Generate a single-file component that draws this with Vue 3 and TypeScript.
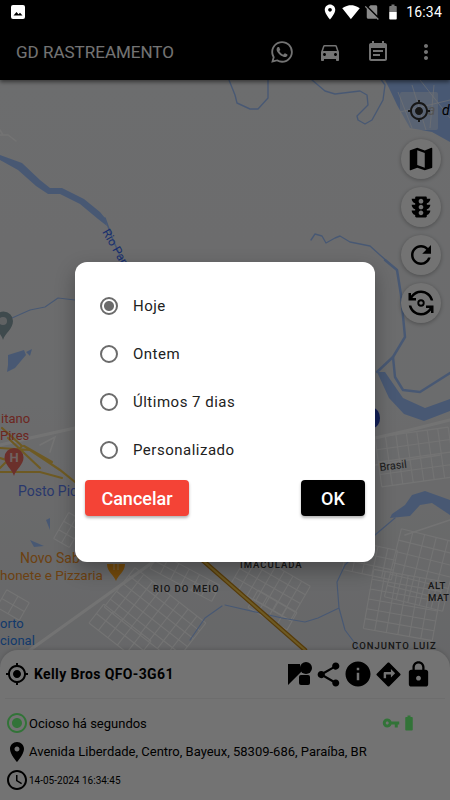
<script setup lang="ts">
import { ref } from 'vue'

interface Grid {
  x: number
  y: number
  w: number
  h: number
  cols: number
  rows: number
  rot: number
}

const options = ['Hoje', 'Ontem', 'Últimos 7 dias', 'Personalizado']
const selected = ref('Hoje')

// street blocks on the map
const grids: Grid[] = [
  { x: 378, y: 432, w: 74, h: 50, cols: 7, rows: 4, rot: -8 },
  { x: 392, y: 535, w: 60, h: 70, cols: 5, rows: 6, rot: 14 },
  { x: 368, y: 575, w: 70, h: 60, cols: 6, rows: 6, rot: 10 },
  { x: 345, y: 545, w: 50, h: 30, cols: 5, rows: 3, rot: 12 },
  { x: 110, y: 590, w: 90, h: 50, cols: 8, rows: 5, rot: 38 },
  { x: 90, y: 620, w: 60, h: 24, cols: 5, rows: 2, rot: 38 },
  { x: 235, y: 566, w: 70, h: 40, cols: 7, rows: 4, rot: 30 },
  { x: 250, y: 600, w: 45, h: 20, cols: 4, rows: 2, rot: 30 },
  { x: 150, y: 568, w: 70, h: 18, cols: 6, rows: 2, rot: 28 },
  { x: 60, y: 515, w: 18, h: 30, cols: 2, rows: 3, rot: 30 },
  { x: 0, y: 595, w: 26, h: 20, cols: 2, rows: 2, rot: 30 },
]

function gridPath(g: Grid): string {
  let d = ''
  for (let i = 0; i <= g.cols; i++) {
    const px = g.x + (g.w / g.cols) * i
    d += `M${px} ${g.y}V${g.y + g.h}`
  }
  for (let i = 0; i <= g.rows; i++) {
    const py = g.y + (g.h / g.rows) * i
    d += `M${g.x} ${py}H${g.x + g.w}`
  }
  return d
}
</script>

<template>
  <div class="phone">
    <div class="status">
      <svg class="st-img" viewBox="0 0 14 14"><rect width="14" height="14" rx="2" fill="#fff" /><path d="M2.500 10.500 5.500 7l2 2.300L9 7.800l2.500 2.700z" fill="#000" /></svg>
      <div class="st-right">
        <svg class="st-ic" viewBox="0 0 24 24"><path fill="#fff" d="M12 2C8.130 2 5 5.130 5 9c0 5.250 7 13 7 13s7-7.750 7-13c0-3.870-3.130-7-7-7zm0 9.500c-1.380 0-2.500-1.120-2.500-2.500s1.120-2.500 2.500-2.500 2.500 1.120 2.500 2.500-1.120 2.500-2.500 2.500z" /></svg>
        <svg class="st-ic" viewBox="0 0 24 24"><path fill="#fff" d="M12.010 21.490L23.640 7c-.45-.34-4.930-4-11.640-4C5.280 3 .81 6.660.36 7l11.640 14.500.01-.01z" /></svg>
        <svg class="st-ic" viewBox="0 0 24 24"><path fill="#8a8a8a" d="M18.990 5c0-1.100-.89-2-1.990-2h-7L7.660 5.340 19 16.680 18.990 5zM3.650 3.880L2.380 5.150 5 7.770V19c0 1.100.9 2 2 2h10.010c.35 0 .67-.1.96-.26l1.880 1.880 1.270-1.270L3.650 3.880z" /></svg>
        <svg class="st-ic" viewBox="0 0 24 24"><path fill="#777" d="M15.670 4H14V2h-4v2H8.330C7.600 4 7 4.600 7 5.330V12h10V5.330C17 4.600 16.400 4 15.670 4z" /><path fill="#fff" d="M7 12v8.670C7 21.400 7.600 22 8.330 22h7.330c.74 0 1.340-.6 1.340-1.330V12z" /></svg>
        <span class="time">16:34</span>
      </div>
    </div>

    <header class="appbar">
      <span class="brand">GD RASTREAMENTO</span>
      <div class="actions">
        <button class="act"><svg class="wa" viewBox="0 0 24 24"><path d="M12.040 2C6.580 2 2.130 6.450 2.130 11.910c0 1.750.46 3.450 1.320 4.950L2.050 22l5.250-1.380c1.450.79 3.080 1.210 4.740 1.210 5.460 0 9.910-4.450 9.910-9.910 0-2.650-1.030-5.140-2.900-7.010A9.816 9.816 0 0 0 12.040 2m.01 1.670c2.200 0 4.260.86 5.820 2.420a8.225 8.225 0 0 1 2.410 5.830c0 4.540-3.700 8.230-8.240 8.230-1.480 0-2.930-.39-4.190-1.150l-.3-.17-3.120.82.83-3.040-.2-.32a8.188 8.188 0 0 1-1.260-4.380c.01-4.540 3.700-8.240 8.250-8.240M8.530 7.330c-.16 0-.43.06-.66.31-.22.25-.87.86-.87 2.070 0 1.220.89 2.390 1 2.560.14.17 1.760 2.670 4.250 3.730.59.27 1.050.42 1.410.53.59.19 1.130.16 1.560.1.48-.07 1.460-.6 1.670-1.180.21-.58.21-1.070.15-1.180-.07-.1-.23-.16-.48-.27-.25-.14-1.470-.74-1.690-.82-.23-.08-.37-.12-.56.12-.16.25-.64.81-.78.97-.15.17-.29.19-.53.07-.26-.13-1.060-.39-2-1.230-.74-.66-1.230-1.470-1.380-1.720-.12-.24-.01-.39.11-.5.11-.11.27-.29.37-.44.13-.14.17-.25.25-.41.08-.17.04-.31-.02-.43-.06-.11-.56-1.350-.77-1.840-.2-.48-.4-.42-.56-.43-.14 0-.3-.01-.47-.01z" /></svg></button>
        <button class="act"><svg viewBox="0 0 24 24"><path d="M18.920 6.010C18.720 5.420 18.160 5 17.500 5h-11c-.66 0-1.210.42-1.420 1.010L3 12v8c0 .55.45 1 1 1h1c.55 0 1-.45 1-1v-1h12v1c0 .55.45 1 1 1h1c.55 0 1-.45 1-1v-8l-2.080-5.990zM6.500 16c-.83 0-1.500-.67-1.500-1.500S5.670 13 6.500 13s1.500.67 1.500 1.500S7.330 16 6.500 16zm11 0c-.83 0-1.500-.67-1.500-1.500s.67-1.500 1.500-1.500 1.500.67 1.500 1.500-.67 1.500-1.500 1.500zM5 11l1.500-4.500h11L19 11H5z" /></svg></button>
        <button class="act"><svg viewBox="0 0 24 24"><path d="M17 10H7v2h10v-2zm2-7h-1V1h-2v2H8V1H6v2H5c-1.110 0-1.990.9-1.990 2L3 19c0 1.100.89 2 2 2h14c1.100 0 2-.9 2-2V5c0-1.100-.9-2-2-2zm0 16H5V8h14v11zm-5-5H7v2h7v-2z" /></svg></button>
        <button class="act"><svg viewBox="0 0 24 24"><path d="M12 8c1.100 0 2-.9 2-2s-.9-2-2-2-2 .9-2 2 .9 2 2 2zm0 2c-1.100 0-2 .9-2 2s.9 2 2 2 2-.9 2-2-.9-2-2-2zm0 6c-1.100 0-2 .9-2 2s.9 2 2 2 2-.9 2-2-.9-2-2-2z" /></svg></button>
      </div>
    </header>

    <main class="map">
      <!-- viewBox uses page coordinates, the map starts 80px down -->
      <svg class="map-art" viewBox="0 80 450 720">
        <defs>
          <linearGradient id="land" x1="0" y1="0" x2="0" y2="1">
            <stop offset="0" stop-color="#f0f1f3" />
            <stop offset=".45" stop-color="#eeeff1" />
            <stop offset="1" stop-color="#dedfe2" />
          </linearGradient>
        </defs>
        <rect x="0" y="80" width="450" height="720" fill="url(#land)" />

        <g fill="none" stroke="#fff" stroke-width="1.100">
          <path v-for="(g, i) in grids" :key="i" :d="gridPath(g)" :transform="`rotate(${g.rot} ${g.x + g.w / 2} ${g.y + g.h / 2})`" />
        </g>
        <g fill="none" stroke="#fff" stroke-linecap="round">
          <path stroke-width="3" d="M30 650 153 562" />
          <path stroke-width="3" d="M0 445 30 438 75 428" />
          <path stroke-width="3" d="M375 438 410 430 450 420" />
          <path stroke-width="1.500" d="M375 465 440 455M405 535 450 520M0 135 8 135 16 141M0 130 3 135M40 445 55 437 50 452" />
        </g>

        <!-- water -->
        <g fill="#a0c4ff" stroke="none">
          <path d="M385 80H450V142L432 132 410 128 397 105 389 88z" />
          <path d="M377 372 389 398 404 414 424 421 450 411V399L425 408 403 398 385 372z" />
          <path d="M0 155 22 163 40 180 50 188 62 188 84 199 100 212 105 218 107 226 98 219 80 204 60 194 48 194 36 186 18 170 0 160z" />
          <path d="M405 505 412 495 425 491 450 500V515L432 503 420 505 410 516 390 518 392 514z" />
          <path d="M8 355 24 350 26 355 15 368 7 372 8 365zM26 352 32 349 30 356z" />
          <path d="M46 520 50 518 50 530zM30 540 44 546 34 547z" />
        </g>
        <g fill="none" stroke="#fff" stroke-width=".8" opacity=".8">
          <path d="M398 92 412 128M412 85 426 130M434 85 430 128M400 112 450 100M420 80 450 118" />
        </g>
        <g fill="none" stroke="#a0c4ff" stroke-linecap="round" stroke-linejoin="round">
          <path stroke-width="1.400" d="M229 80 235 95 237 103 250 109 258 109 268 98 268 80" />
          <path stroke-width="1.400" d="M312 80 325 91 335 94 360 91 367 95 368 105 357 116 358 120 365 124 372 120 383 100 385 85 380 78" />
          <path stroke-width="1.400" d="M311 240 315 234 322 236 326 243 335 238 340 236 350 242 370 246 380 255 397 270" />
          <path stroke-width="2.500" d="M385 260 397 270 401 295 405 337 393 357 377 372" />
          <path stroke-width="2.500" d="M393 357 395 377 403 390 420 392 450 373" />
          <path stroke-width="1.200" d="M12 318 30 310 45 307 58 298 75 300" />
          <path stroke-width="1.600" d="M105 218 113 240 123 262" />
          <path stroke-width="1.200" d="M395 518 375 535 345 565 337 582 339 608 318 618 305 622 282 618 225 605M339 608 345 630 360 650" />
          <path stroke-width="1.200" d="M190 640 205 618 222 606" />
        </g>
        <ellipse cx="373" cy="418" rx="7" ry="10" fill="#2a48c0" />

        <!-- highways -->
        <g fill="none" stroke="#f4c84f" stroke-width="2.200" stroke-linecap="round">
          <path d="M0 468 22 446 2 428M0 448 30 450 60 470 75 482M0 472 40 472 62 478M24 446 52 462M8 438 40 468M0 458 14 462" />
          <path stroke="#c08418" stroke-width="4.500" d="M200 558 305 650" />
          <path stroke="#f4c84f" stroke-width="2" d="M200 558 305 650" />
        </g>

        <!-- pins -->
        <path fill="#ee6a60" d="M14 476c-2-7-9.500-11-9.500-18.500a9.500 9.500 0 0 1 19 0c0 7.500-7.500 11.500-9.500 18.500z" />
        <text class="pin-h" x="14" y="462" text-anchor="middle">H</text>
        <path fill="#8ca4ab" d="M3 340c-2-7-9-11-9-19a9.500 9.500 0 0 1 19 0c0 8-8 12-10 19z" />
        <circle cx="3" cy="321" r="4" fill="#d6dadc" />
        <path fill="#ffa51a" d="M116 581c-2-6-9-9-9-17h18c0 8-7 11-9 17z" />
        <path fill="none" stroke="#ffd9a0" stroke-width="1" d="M114 564v6M118 564v6" />

        <!-- labels -->
        <g class="lbl">
          <text class="mid red" x="1" y="423">itano</text>
          <text class="mid red" x="0" y="440">Pires</text>
          <text class="big" x="18" y="496" fill="#5c7cf0">Posto Pic</text>
          <text class="big" x="20" y="563" fill="#f09028">Novo Sab</text>
          <text class="fit" x="0" y="580" fill="#f09028">honete e Pizzaria</text>
          <text class="mid" x="0" y="628" fill="#2a80ee">orto</text>
          <text class="mid" x="0" y="645" fill="#2a80ee">cional</text>
          <text class="small" x="153" y="592">RIO DO MEIO</text>
          <text class="small" x="240" y="568">IMACULADA</text>
          <text class="small tight" x="428" y="589">ALT</text>
          <text class="small tight" x="428" y="601">MAT</text>
          <text class="small" x="352" y="649">CONJUNTO LUIZ</text>
          <text class="brasil" x="380" y="471" transform="rotate(-7 380 471)">Brasil</text>
          <text class="rio" x="102" y="232" transform="rotate(60 102 232)">Rio Par</text>
          <text class="top" x="428" y="115"><tspan fill="#8d8d8d">a</tspan><tspan x="442">d</tspan></text>
        </g>
      </svg>

      <div class="locate">
        <svg viewBox="0 0 24 24"><path d="M12 8c-2.210 0-4 1.790-4 4s1.790 4 4 4 4-1.790 4-4-1.790-4-4-4zm8.940 3c-.46-4.170-3.770-7.480-7.940-7.940V1h-2v2.060C6.830 3.520 3.520 6.830 3.060 11H1v2h2.060c.46 4.170 3.770 7.480 7.940 7.940V23h2v-2.060c4.170-.46 7.480-3.770 7.940-7.940H23v-2h-2.060zM12 19c-3.870 0-7-3.130-7-7s3.130-7 7-7 7 3.130 7 7-3.130 7-7 7z" /></svg>
      </div>

      <div class="fabs">
        <button class="fab"><svg viewBox="0 0 24 24"><path d="M20.500 3l-.16.030L15 5.100 9 3 3.360 4.900c-.21.070-.36.250-.36.480V20.500c0 .28.220.5.5.5l.16-.03L9 18.900l6 2.100 5.640-1.900c.21-.07.36-.25.36-.48V3.500c0-.28-.22-.5-.5-.5zM15 19l-6-2.110V5l6 2.110V19z" /></svg></button>
        <button class="fab"><svg class="tl" viewBox="0 0 24 24"><path d="M20 10h-3V8.860c1.720-.45 3-2 3-3.860h-3V4c0-.55-.45-1-1-1H8c-.55 0-1 .45-1 1v1H4c0 1.860 1.280 3.410 3 3.860V10H4c0 1.860 1.280 3.410 3 3.860V15H4c0 1.860 1.280 3.410 3 3.860V20c0 .55.45 1 1 1h8c.55 0 1-.45 1-1v-1.140c1.720-.45 3-2 3-3.860h-3v-1.140c1.720-.45 3-2 3-3.860zm-8 9c-1.110 0-2-.9-2-2s.89-2 2-2c1.100 0 2 .9 2 2s-.89 2-2 2zm0-5c-1.110 0-2-.9-2-2s.89-2 2-2c1.100 0 2 .9 2 2s-.89 2-2 2zm0-5c-1.110 0-2-.9-2-2 0-1.110.89-2 2-2 1.100 0 2 .89 2 2 0 1.100-.89 2-2 2z" /></svg></button>
        <button class="fab"><svg viewBox="0 0 24 24"><path d="M17.650 6.350C16.200 4.900 14.210 4 12 4c-4.420 0-7.990 3.580-7.990 8s3.570 8 7.990 8c3.730 0 6.840-2.550 7.730-6h-2.080c-.82 2.330-3.040 4-5.650 4-3.310 0-6-2.690-6-6s2.690-6 6-6c1.660 0 3.140.69 4.220 1.780L13 11h7V4l-2.350 2.350z" /></svg></button>
        <button class="fab"><svg viewBox="0 0 24 24"><path d="M8 10V8H5.090C6.470 5.610 9.050 4 12 4c3.720 0 6.850 2.560 7.740 6h2.060c-.93-4.560-4.960-8-9.800-8-3.270 0-6.180 1.580-8 4.010V4H2v6h6zM16 14v2h2.910c-1.380 2.390-3.960 4-6.910 4-3.720 0-6.850-2.560-7.740-6H2.200c.93 4.560 4.960 8 9.800 8 3.270 0 6.180-1.580 8-4.010V20h2v-6h-6z" /><circle cx="12" cy="12" r="2.200" fill="none" stroke="#000" stroke-width="1.500" /></svg></button>
      </div>

      <section class="sheet">
        <div class="sheet-head">
          <svg class="target" viewBox="0 0 24 24"><path d="M12 8c-2.210 0-4 1.790-4 4s1.790 4 4 4 4-1.790 4-4-1.790-4-4-4zm8.940 3c-.46-4.170-3.770-7.480-7.940-7.940V1h-2v2.060C6.830 3.520 3.520 6.830 3.060 11H1v2h2.060c.46 4.170 3.770 7.480 7.940 7.940V23h2v-2.060c4.170-.46 7.480-3.770 7.940-7.940H23v-2h-2.060zM12 19c-3.870 0-7-3.130-7-7s3.130-7 7-7 7 3.130 7 7-3.130 7-7 7z" /></svg>
          <span class="plate">Kelly Bros QFO-3G61</span>
          <div class="tools">
            <svg class="t-map" viewBox="0 0 26 24"><path d="M1 2h12c0 3 1 5 3 6L1 23z" /><circle cx="19" cy="6" r="6" /><rect x="12" y="13" width="11" height="10" rx="2" /></svg>
            <svg viewBox="0 0 24 24"><path d="M18 16.080c-.76 0-1.440.3-1.960.77L8.910 12.700c.05-.23.09-.46.09-.7s-.04-.47-.09-.7l7.050-4.110c.54.5 1.250.81 2.040.81 1.660 0 3-1.340 3-3s-1.340-3-3-3-3 1.340-3 3c0 .24.04.47.09.7L8.040 9.810C7.500 9.310 6.790 9 6 9c-1.660 0-3 1.340-3 3s1.340 3 3 3c.79 0 1.500-.31 2.040-.81l7.120 4.160c-.05.21-.08.43-.08.65 0 1.610 1.310 2.920 2.920 2.920 1.610 0 2.920-1.310 2.920-2.920s-1.310-2.920-2.920-2.920z" /></svg>
            <svg class="t-info" viewBox="0 0 24 24"><path d="M12 2C6.480 2 2 6.480 2 12s4.480 10 10 10 10-4.480 10-10S17.520 2 12 2zm1 15h-2v-6h2v6zm0-8h-2V7h2v2z" /></svg>
            <svg viewBox="0 0 24 24"><path d="M21.710 11.290l-9-9c-.39-.39-1.020-.39-1.410 0l-9 9c-.39.39-.39 1.020 0 1.410l9 9c.39.39 1.020.39 1.410 0l9-9c.39-.38.39-1.010 0-1.410zM14 14.500V12h-4v3H8v-4c0-.55.45-1 1-1h5V7.500l3.500 3.500-3.500 3.500z" /></svg>
            <svg viewBox="0 0 24 24"><path d="M18 8h-1V6c0-2.760-2.240-5-5-5S7 3.240 7 6v2H6c-1.100 0-2 .9-2 2v10c0 1.100.9 2 2 2h12c1.100 0 2-.9 2-2V10c0-1.100-.9-2-2-2zm-6 9c-1.100 0-2-.9-2-2s.9-2 2-2 2 .9 2 2-.9 2-2 2zm3.100-9H8.900V6c0-1.710 1.390-3.100 3.100-3.100 1.710 0 3.100 1.390 3.100 3.100v2z" /></svg>
          </div>
        </div>
        <div class="rows">
          <div class="row">
            <svg class="r-ic green" viewBox="0 0 24 24"><path d="M12 7c-2.760 0-5 2.240-5 5s2.240 5 5 5 5-2.240 5-5-2.240-5-5-5zm0-5C6.480 2 2 6.480 2 12s4.480 10 10 10 10-4.480 10-10S17.520 2 12 2zm0 18c-4.420 0-8-3.580-8-8s3.580-8 8-8 8 3.580 8 8-3.580 8-8 8z" /></svg>
            <span>Ocioso há segundos</span>
            <div class="flags">
              <svg class="green" viewBox="0 0 24 24"><path d="M12.650 10C11.830 7.670 9.610 6 7 6c-3.310 0-6 2.690-6 6s2.690 6 6 6c2.610 0 4.830-1.670 5.650-4H17v4h4v-4h2v-4H12.650zM7 14c-1.100 0-2-.9-2-2s.9-2 2-2 2 .9 2 2-.9 2-2 2z" /></svg>
              <svg class="green" viewBox="0 0 24 24"><path d="M15.670 4H14V2h-4v2H8.330C7.600 4 7 4.600 7 5.330v15.330C7 21.400 7.600 22 8.330 22h7.330c.74 0 1.340-.6 1.340-1.330V5.330C17 4.600 16.400 4 15.670 4z" /></svg>
            </div>
          </div>
          <div class="row">
            <svg class="r-ic" viewBox="0 0 24 24"><path d="M12 2C8.130 2 5 5.130 5 9c0 5.250 7 13 7 13s7-7.750 7-13c0-3.870-3.130-7-7-7zm0 9.500c-1.380 0-2.500-1.120-2.500-2.500s1.120-2.500 2.500-2.500 2.500 1.120 2.500 2.500-1.120 2.500-2.500 2.500z" /></svg>
            <span>Avenida Liberdade, Centro, Bayeux, 58309-686, Paraíba, BR</span>
          </div>
          <div class="row">
            <svg class="r-ic" viewBox="0 0 24 24"><path d="M11.990 2C6.470 2 2 6.480 2 12s4.470 10 9.990 10C17.520 22 22 17.520 22 12S17.520 2 11.990 2zM12 20c-4.420 0-8-3.580-8-8s3.580-8 8-8 8 3.580 8 8-3.580 8-8 8zm.5-13H11v6l5.250 3.150.75-1.230-4.500-2.670z" /></svg>
            <span class="date">14-05-2024 16:34:45</span>
          </div>
        </div>
      </section>
    </main>

    <div class="scrim">
      <div class="dialog">
        <label v-for="o in options" :key="o" class="opt" @click="selected = o">
          <span class="radio" :class="{ on: selected === o }"></span>
          <span>{{ o }}</span>
        </label>
        <div class="btns">
          <button class="btn cancel">Cancelar</button>
          <button class="btn ok">OK</button>
        </div>
      </div>
    </div>
  </div>
</template>

<style>
html, body { margin: 0; background: #000; }
</style>

<style scoped>
.phone {
  position: relative;
  width: 450px;
  height: 800px;
  overflow: hidden;
  display: flex;
  flex-direction: column;
  background: #000;
  font-family: Roboto, "Liberation Sans", sans-serif;
}
button { border: 0; padding: 0; background: none; font-family: inherit; }
svg { display: block; }

.status {
  height: 24px;
  display: flex;
  align-items: center;
  justify-content: space-between;
  padding: 0 8px 0 11px;
}
.st-img { width: 14px; height: 14px; }
.st-right { display: flex; align-items: center; gap: 3px; }
.st-ic { width: 18px; height: 18px; }
.time { color: #fff; font-size: 14px; font-weight: 400; letter-spacing: .2px; margin-left: 1px; }

.appbar {
  position: relative;
  z-index: 2;
  height: 56px;
  display: flex;
  align-items: center;
  justify-content: space-between;
  padding-left: 16px;
  box-shadow: 0 2px 4px rgba(0, 0, 0, .5);
  background: #000;
}
.brand { color: #fff; font-size: 17px; font-weight: 400; }
.actions { display: flex; }
.act { width: 48px; height: 48px; display: flex; align-items: center; justify-content: center; }
.act svg { width: 24px; height: 24px; fill: #fff; }
.act .wa { width: 26px; height: 26px; }

.map { position: relative; flex: 1; }
.map-art { position: absolute; inset: 0; width: 100%; height: 100%; }
.lbl .mid { font-size: 13px; }
.lbl .red { fill: #f0564a; }
.lbl .big { font-size: 14px; }
.lbl .fit { font-size: 13.500px; }
.lbl .small { font-size: 9.500px; letter-spacing: 1px; fill: #333; font-weight: 500; }
.lbl .tight { letter-spacing: .6px; }
.lbl .brasil { font-size: 11px; fill: #444; }
.lbl .rio { font-size: 12px; fill: #3a68f0; }
.lbl .top { font-size: 14px; fill: #000; font-style: italic; }
.pin-h { font-size: 13px; font-weight: 700; fill: #f6d8d4; }

.locate {
  position: absolute;
  top: 12px;
  right: 12px;
  width: 38px;
  height: 38px;
  display: flex;
  align-items: center;
  justify-content: center;
  background: rgba(255, 255, 255, .4);
  border-radius: 2px;
}
.locate svg { width: 24px; height: 24px; fill: #333; }

.fabs {
  position: absolute;
  top: 59px;
  right: 9px;
  display: flex;
  flex-direction: column;
  gap: 8px;
}
.fab {
  width: 40px;
  height: 40px;
  border-radius: 50%;
  background: #fff;
  display: flex;
  align-items: center;
  justify-content: center;
  box-shadow: 0 1px 4px rgba(0, 0, 0, .3);
}
.fab svg { width: 30px; height: 30px; fill: #000; }
.fab .tl { width: 28px; height: 28px; }

.sheet {
  position: absolute;
  left: 0;
  right: 0;
  bottom: 0;
  height: 150px;
  background: #fff;
  border-radius: 18px 18px 0 0;
  box-shadow: 0 -1px 4px rgba(0, 0, 0, .15);
}
.sheet-head {
  height: 48px;
  display: flex;
  align-items: center;
  margin: 0 5px;
  border-bottom: 1px solid #f2f2f2;
}
.target { width: 24px; height: 24px; flex: none; }
.plate { font-size: 14px; font-weight: 700; letter-spacing: .37px; color: #000; margin-left: 5px; }
.tools { margin-left: auto; display: flex; align-items: center; padding-right: 12px; }
.tools svg { width: 29px; height: 29px; margin: 0 .5px; }
.tools .t-map { width: 26px; height: 24px; margin: 0 0 0 1px; }
.tools .t-info { width: 30px; height: 30px; margin: 0; }

.rows { padding-top: 10px; padding-left: 5px; }
.row {
  height: 28.500px;
  display: flex;
  align-items: center;
  font-size: 13px;
  color: #000;
}
.r-ic { width: 24px; height: 24px; flex: none; }
.green { fill: #70ff7c; }
.date { font-size: 10px; }
.flags { margin-left: auto; margin-right: 32px; display: flex; align-items: center; }
.flags svg { width: 18px; height: 18px; }

.scrim {
  position: absolute;
  z-index: 5;
  top: 24px;
  left: 0;
  right: 0;
  bottom: 0;
  display: flex;
  align-items: center;
  justify-content: center;
  background: rgba(0, 0, 0, .55);
}
.dialog {
  width: 300px;
  height: 300px;
  box-sizing: border-box;
  padding: 20px 10px 0;
  background: #fff;
  border-radius: 12px;
  box-shadow: 0 8px 20px rgba(0, 0, 0, .3);
}
.opt {
  height: 48px;
  display: flex;
  align-items: center;
  gap: 15px;
  padding-left: 15px;
  font-size: 15px;
  letter-spacing: .5px;
  color: #212121;
}
.radio {
  width: 18px;
  height: 18px;
  box-sizing: border-box;
  border: 2px solid #6b6b6b;
  border-radius: 50%;
  flex: none;
}
.radio.on { background: radial-gradient(circle, #6b6b6b 0 4.500px, #fff 5.500px); }
.btns { display: flex; justify-content: space-between; margin-top: 6px; }
.btn {
  height: 36px;
  border-radius: 4px;
  color: #fff;
  font-size: 18px;
  font-weight: 500;
  box-shadow: 0 2px 3px rgba(0, 0, 0, .3);
}
.cancel { width: 104px; background: #f44336; }
.ok { width: 64px; background: #000; }
</style>
